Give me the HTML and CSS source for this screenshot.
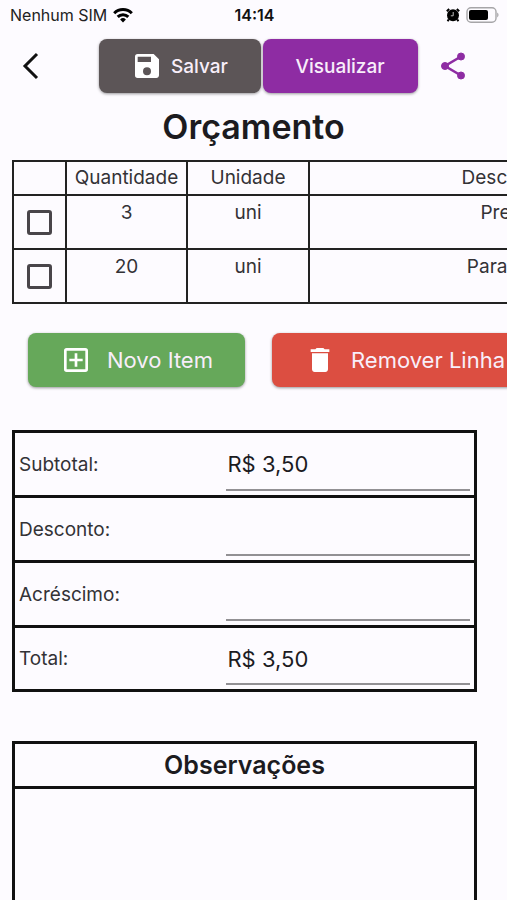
FILE: index.html
```html
<!DOCTYPE html>
<html lang="pt-BR">
<head>
    <meta charset="UTF-8">
    <meta name="viewport" content="width=device-width, initial-scale=1.0">
    <title>Orçamento</title>
    <link rel="stylesheet" href="styles.css">
</head>
<body>
    <div class="status-bar">
        <div class="carrier">
            <span>Nenhum SIM</span>
            <svg width="20" height="16" viewBox="0 0 20 16" fill="none" stroke="#000" stroke-width="3">
                <path d="M1.2 6.2a12.4 12.4 0 0 1 17.6 0"/>
                <path d="M4.7 9.9a7.5 7.5 0 0 1 10.6 0"/>
                <path d="M10 15.4l-2.9-3a4.1 4.1 0 0 1 5.8 0z" fill="#000" stroke="none"/>
            </svg>
        </div>
        <span class="clock">14:14</span>
        <div class="indicators">
            <svg width="14" height="14" viewBox="0 0 14 14">
                <circle cx="7" cy="7.2" r="6"/>
                <path d="M.8 3.2L3.2 1M13.2 3.2L10.8 1M2.8 11.4l-1.200 1.800M11.200 11.400l1.200 1.800" stroke="#000" stroke-width="2"/>
                <path d="M7.2 4v3.8H4.8" fill="none" stroke="#bbb" stroke-width="1"/>
            </svg>
            <svg width="33" height="16" viewBox="0 0 33 16">
                <rect x="1" y=".8" width="29" height="14.4" rx="4" fill="none" stroke="#a6a5a8" stroke-width="1.4"/>
                <rect x="3" y="3" width="19" height="10" rx="2"/>
                <path d="M31.2 5.6c1.8.8 1.8 4 0 4.8z" fill="#a6a5a8"/>
            </svg>
        </div>
    </div>

    <header class="toolbar">
        <button class="icon-btn back" aria-label="Voltar">
            <svg width="20" height="28" viewBox="0 0 20 28" fill="none" stroke="#111" stroke-width="3">
                <path d="M17 2L5 14l12 12"/>
            </svg>
        </button>
        <div class="actions">
            <button class="btn btn-save">
                <svg width="32" height="32" viewBox="0 0 24 24" fill="#fff">
                    <path d="M17 3H5a2 2 0 0 0-2 2v14a2 2 0 0 0 2 2h14c1.1 0 2-.9 2-2V7l-4-4zm-2 6H5V5h10v4zm-3 10a3 3 0 1 1 0-6 3 3 0 0 1 0 6z"/>
                </svg>
                Salvar
            </button>
            <button class="btn btn-view">Visualizar</button>
        </div>
        <button class="icon-btn share" aria-label="Compartilhar">
            <svg width="26" height="28" viewBox="0 0 26 28" fill="#8e2ca3" stroke="#8e2ca3">
                <path d="M21 4.5L5 14l16 9.5" fill="none" stroke-width="2.6"/>
                <circle cx="21" cy="4.5" r="3.5"/>
                <circle cx="5" cy="14" r="3.5"/>
                <circle cx="21" cy="23.5" r="3.5"/>
            </svg>
        </button>
    </header>

    <main>
        <h1>Orçamento</h1>

        <div class="scroll-x">
            <table class="items">
                <thead>
                    <tr>
                        <th class="col-check"></th>
                        <th class="col-qty">Quantidade</th>
                        <th class="col-unit">Unidade</th>
                        <th class="col-desc">Descrição</th>
                    </tr>
                </thead>
                <tbody>
                    <tr>
                        <td class="check"><input type="checkbox" aria-label="Selecionar item 1"></td>
                        <td>3</td>
                        <td>uni</td>
                        <td>Prego</td>
                    </tr>
                    <tr>
                        <td class="check"><input type="checkbox" aria-label="Selecionar item 2"></td>
                        <td>20</td>
                        <td>uni</td>
                        <td>Parafuso</td>
                    </tr>
                </tbody>
            </table>
        </div>

        <div class="scroll-x row-actions">
            <button class="btn btn-add">
                <svg width="32" height="32" viewBox="0 0 24 24" fill="#fff">
                    <path d="M19 3H5a2 2 0 0 0-2 2v14a2 2 0 0 0 2 2h14a2 2 0 0 0 2-2V5a2 2 0 0 0-2-2zm0 16H5V5h14v14zm-8-2h2v-4h4v-2h-4V7h-2v4H7v2h4z"/>
                </svg>
                Novo Item
            </button>
            <button class="btn btn-remove">
                <svg width="32" height="32" viewBox="0 0 24 24" fill="#fff">
                    <path d="M6 19c0 1.1.9 2 2 2h8c1.1 0 2-.9 2-2V7H6v12zM19 4h-3.5l-1-1h-5l-1 1H5v2h14V4z"/>
                </svg>
                Remover Linha
            </button>
        </div>

        <section class="box totals">
            <div class="line">
                <label for="subtotal">Subtotal:</label>
                <input type="text" id="subtotal" value="R$ 3,50">
            </div>
            <div class="line">
                <label for="desconto">Desconto:</label>
                <input type="text" id="desconto">
            </div>
            <div class="line">
                <label for="acrescimo">Acréscimo:</label>
                <input type="text" id="acrescimo">
            </div>
            <div class="line">
                <label for="total">Total:</label>
                <input type="text" id="total" value="R$ 3,50">
            </div>
        </section>

        <section class="box notes">
            <h2><label for="obs">Observações</label></h2>
            <textarea id="obs"></textarea>
        </section>
    </main>
</body>
</html>
```

FILE: styles.css
```css
* {
    box-sizing: border-box;
    margin: 0;
    padding: 0;
}

body {
    height: 100vh;
    display: flex;
    flex-direction: column;
    overflow: hidden;
    background-color: #fdfbff;
    color: #1c1b1f;
    font-family: Inter, "Liberation Sans", sans-serif;
    font-size: 19px;
}

svg {
    display: block;
    flex: none;
}

button, input, textarea {
    font-family: inherit;
    color: inherit;
}

/* status bar */
.status-bar {
    display: grid;
    grid-template-columns: 1fr auto 1fr;
    align-items: center;
    height: 30px;
    padding: 0 8px 0 10px;
    font-size: 16px;
    color: #222;
}

.carrier, .indicators {
    display: flex;
    align-items: center;
    gap: 6px;
}

.indicators {
    justify-content: flex-end;
}

.clock {
    font-weight: 600;
    color: #111;
}

/* top toolbar */
.toolbar {
    display: flex;
    align-items: center;
    justify-content: space-between;
    padding: 9px 41px 9px 20px;
}

.actions {
    display: flex;
    gap: 2px;
    margin-left: 36px;
}

.icon-btn {
    border: none;
    background: none;
    cursor: pointer;
}

.btn {
    display: flex;
    flex: none;
    align-items: center;
    justify-content: center;
    height: 54px;
    border: none;
    border-radius: 8px;
    color: #f8eefa;
    font-size: 19px;
    font-weight: 500;
    white-space: nowrap;
    box-shadow: 0 1px 3px rgba(0, 0, 0, 0.4);
    cursor: pointer;
}

.btn-save {
    width: 162px;
    gap: 8px;
    background-color: #5c5557;
}

.btn-view {
    width: 155px;
    background-color: #8e2ca3;
}

main {
    flex: 1;
    overflow-y: auto;
    scrollbar-width: none;
}

h1 {
    padding: 4px 0 12px;
    font-size: 34px;
    font-weight: 600;
    line-height: 42px;
    text-align: center;
}

.scroll-x {
    overflow-x: auto;
    scrollbar-width: none;
}

/* items table */
.items {
    width: 694px;
    margin-left: 12px;
    table-layout: fixed;
    border-collapse: collapse;
    color: #333236;
}

.items th, .items td {
    border: 2px solid #222;
    font-weight: 400;
    text-align: center;
    vertical-align: top;
    line-height: 24px;
}

.items th {
    height: 34px;
    padding-top: 4px;
}

.items td {
    height: 54px;
    padding-top: 5px;
}

.items .col-check {
    width: 53px;
}

.items .col-qty {
    width: 121px;
}

.items .col-unit {
    width: 122px;
}

.items .check {
    padding: 0;
    vertical-align: middle;
}

.check input {
    display: block;
    width: 25px;
    height: 25px;
    margin: 0 auto;
    appearance: none;
    border: 3px solid #49454a;
    border-radius: 3px;
}

.check input:checked {
    background-color: #8e2ca3;
}

/* buttons under the table */
.row-actions {
    display: flex;
    gap: 27px;
    padding: 29px 28px 43px;
}

.row-actions .btn {
    gap: 15px;
    padding: 0 32px;
    font-size: 22px;
    font-weight: 400;
}

.btn-add {
    background-color: #66a85a;
}

.btn-remove {
    background-color: #dc4e41;
}

/* boxes */
.box {
    margin: 0 30px 49px 12px;
    border: 3px solid #111;
}

.line {
    display: flex;
    height: 65px;
    padding: 0 4px;
    border-bottom: 3px solid #111;
}

.line:last-child {
    height: 61px;
    border-bottom: none;
}

.line label {
    width: 46%;
    align-self: center;
    font-size: 19px;
    color: #333236;
}

.line input {
    flex: 1;
    min-width: 0;
    margin-bottom: 4px;
    padding: 6px 0 0 1px;
    border: none;
    border-bottom: 2px solid #929094;
    outline: none;
    background: none;
    font-size: 22px;
}

.notes h2 {
    border-bottom: 3px solid #111;
    font-size: 25px;
    font-weight: 600;
    line-height: 42px;
    text-align: center;
}

.notes textarea {
    display: block;
    width: 100%;
    height: 300px;
    padding: 8px;
    border: none;
    outline: none;
    resize: none;
    background: none;
    font-size: 19px;
}
```
